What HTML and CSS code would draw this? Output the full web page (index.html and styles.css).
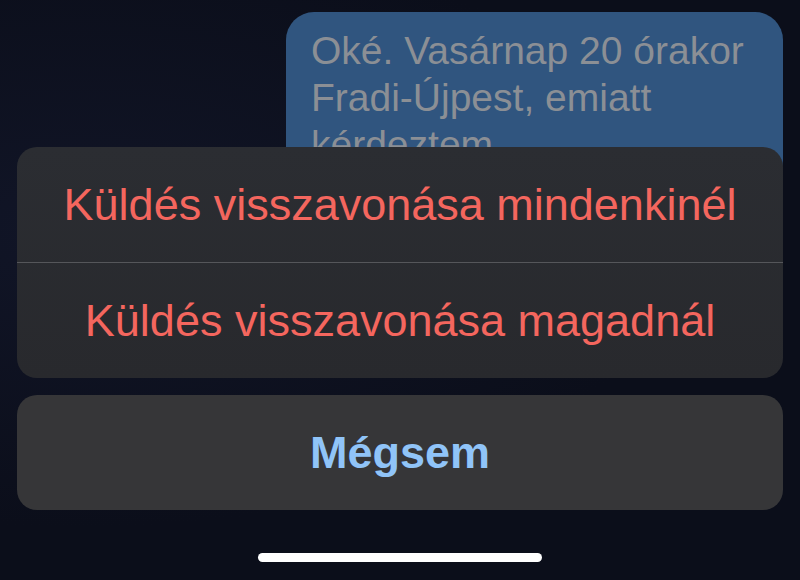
FILE: index.html
```html
<!DOCTYPE html>
<html lang="hu">
<head>
  <meta charset="UTF-8">
  <meta name="viewport" content="width=device-width, initial-scale=1.0">
  <title>Üzenet</title>
  <link rel="stylesheet" href="styles.css">
</head>
<body>
  <div class="screen">
    <!-- beszélgetés -->
    <div class="chat">
      <div class="bubble">Oké. Vasárnap 20 órakor Fradi-Újpest, emiatt kérdeztem</div>
    </div>

    <!-- action sheet -->
    <div class="sheet">
      <div class="group">
        <div class="action destructive">Küldés visszavonása mindenkinél</div>
        <div class="action destructive">Küldés visszavonása magadnál</div>
      </div>
      <div class="cancel">Mégsem</div>
      <div class="home-bar"></div>
    </div>
  </div>
</body>
</html>
```

FILE: styles.css
```css
* {
  box-sizing: border-box;
}
html, body {
  margin: 0;
  height: 100%;
}
body {
  font-family: "Liberation Sans", Arial, sans-serif;
  background: #0b0e1a;
  overflow: hidden;
}
.screen {
  position: relative;
  width: 800px;
  height: 580px;
  background: radial-gradient(ellipse at 10% 40%, #111527 0%, #0b0e1a 60%);
}
.chat {
  display: flex;
  justify-content: flex-end;
  padding: 12px 17px 0 0;
}
.bubble {
  width: 497px;
  background: #30557f;
  color: #8b8f95;
  font-size: 39px;
  line-height: 47px;
  padding: 15px 25px 20px;
  border-radius: 28px;
}
.sheet {
  position: absolute;
  left: 0;
  right: 0;
  top: 147px;
  bottom: 0;
  padding: 0 17px;
  display: flex;
  flex-direction: column;
}
.group {
  background: linear-gradient(180deg, #2b2d32 0%, #28292d 100%);
  border-radius: 20px;
  overflow: hidden;
}
.action {
  height: 115px;
  display: flex;
  align-items: center;
  justify-content: center;
  font-size: 45px;
}
.action + .action {
  height: 116px;
  border-top: 1px solid #55565a;
}
.destructive {
  color: #f4665e;
}
.cancel {
  margin-top: 17px;
  height: 115px;
  background: #363638;
  border-radius: 20px;
  display: flex;
  align-items: center;
  justify-content: center;
  font-size: 45px;
  font-weight: bold;
  color: #90c4f8;
}
.home-bar {
  width: 284px;
  height: 9px;
  margin: 43px auto 0;
  background: #ffffff;
  border-radius: 5px;
}
```
